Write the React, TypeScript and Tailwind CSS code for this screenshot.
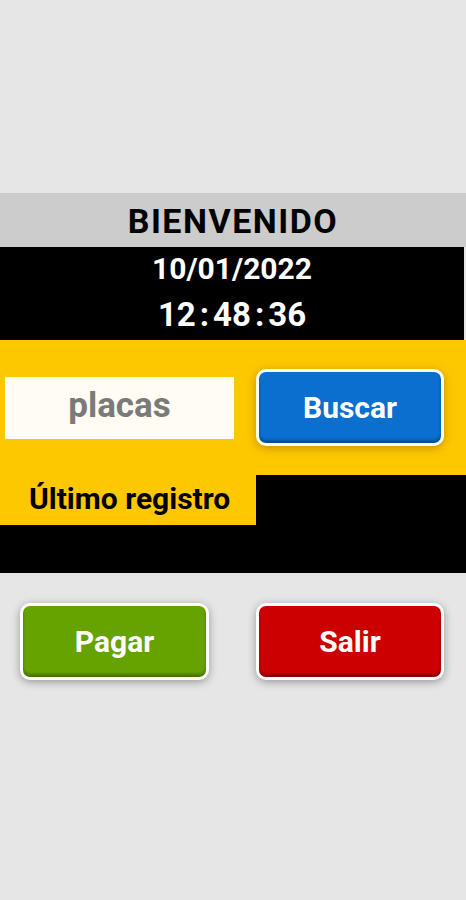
import React from "react";

const font = { fontFamily: "Roboto, 'Noto Sans', sans-serif" };

function RaisedButton({ label, color }: { label: string; color: string }) {
  return (
    <button
      type="button"
      className={`flex h-full w-full items-center justify-center rounded-[10px] border-[3px] border-white text-[30px] font-bold text-white ${color}`}
    >
      {label}
    </button>
  );
}

export default function App() {
  return (
    <div className="min-h-[900px] bg-[#e6e6e6] pt-[193px]" style={font}>
      {/* encabezado */}
      <div className="flex h-[54px] items-center justify-center bg-[#cccccc] pt-[2px] text-[34px] font-bold tracking-[1.5px] text-black">
        BIENVENIDO
      </div>

      {/* fecha y hora */}
      <div className="mr-[2px] flex h-[93px] flex-col items-center bg-black font-bold text-white">
        <div className="text-[30px] leading-[44px]">10/01/2022</div>
        <div className="mt-[2px] flex text-[33px] leading-[44px]">
          <span>12</span>
          <span className="mx-[4px]">:</span>
          <span>48</span>
          <span className="mx-[4px]">:</span>
          <span>36</span>
        </div>
      </div>

      {/* búsqueda */}
      <div className="flex h-[135px] items-center bg-[#fec800]">
        <div className="ml-[5px] flex h-[62px] w-[229px] items-center justify-center bg-[#fffdf3] pb-[2px] text-[35px] font-bold text-[#7a7a7a]">
          placas
        </div>
        <div className="ml-[22px] h-[77px] w-[188px]">
          <RaisedButton
            label="Buscar"
            color="bg-[#0a6fcf] shadow-[0_2px_10px_rgba(150,100,0,0.55),inset_0_-3px_3px_rgba(0,0,0,0.3)]"
          />
        </div>
      </div>

      {/* último registro */}
      <div className="flex h-[50px] bg-black">
        <div className="flex w-[256px] items-center bg-[#fec800] pb-[4px] pl-[29px] text-[30px] font-bold text-black">
          Último registro
        </div>
      </div>
      <div className="h-[48px] bg-black" />

      {/* acciones */}
      <div className="mt-[30px] flex h-[77px] gap-[47px] pl-[20px]">
        <div className="w-[189px]">
          <RaisedButton
            label="Pagar"
            color="bg-[#66a300] shadow-[0_2px_8px_rgba(0,0,0,0.35),inset_0_-3px_3px_rgba(0,0,0,0.3)]"
          />
        </div>
        <div className="w-[188px]">
          <RaisedButton
            label="Salir"
            color="bg-[#cc0000] shadow-[0_2px_8px_rgba(0,0,0,0.35),inset_0_-3px_3px_rgba(0,0,0,0.3)]"
          />
        </div>
      </div>
    </div>
  );
}
